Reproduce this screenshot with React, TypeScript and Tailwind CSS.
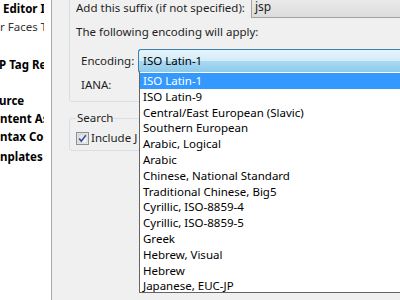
const encodings = [
  "ISO Latin-1",
  "ISO Latin-9",
  "Central/East European (Slavic)",
  "Southern European",
  "Arabic, Logical",
  "Arabic",
  "Chinese, National Standard",
  "Traditional Chinese, Big5",
  "Cyrillic, ISO-8859-4",
  "Cyrillic, ISO-8859-5",
  "Greek",
  "Hebrew, Visual",
  "Hebrew",
  "Japanese, EUC-JP",
];

const treeRows: { text: string; bold: boolean; x: number; y: number }[] = [
  { text: "Editor I", bold: true, x: 3, y: 9 },
  { text: "r Faces T", bold: false, x: 0, y: 27 },
  { text: "P Tag Re", bold: true, x: -1, y: 65 },
  { text: "urce", bold: true, x: -1, y: 101 },
  { text: "ntent As", bold: true, x: 0, y: 119 },
  { text: "ntax Col", bold: true, x: 0, y: 137 },
  { text: "nplates", bold: true, x: 0, y: 157 },
];

const CheckBox = () => (
  <svg width="13" height="13" viewBox="0 0 13 13" className="shrink-0">
    <defs>
      <linearGradient id="cb" x1="0" y1="0" x2="1" y2="1">
        <stop offset="0" stopColor="#dcdcdc" />
        <stop offset="1" stopColor="#ffffff" />
      </linearGradient>
    </defs>
    <rect x="0.5" y="0.5" width="12" height="12" fill="#f4f4f4" stroke="#8e8f8f" />
    <rect x="2" y="2" width="9" height="9" fill="url(#cb)" stroke="#b9b9b9" strokeWidth="0.6" />
    <path d="M3.2 6.4 L5.3 9.2 L9.8 3.2" fill="none" stroke="#2e4ea8" strokeWidth="1.6" />
  </svg>
);

export default function App() {
  return (
    <div
      className="relative flex w-[400px] h-[300px] overflow-hidden bg-[#f0f0f0] text-[11.5px] text-[#1e1e1e]"
      style={{ fontFamily: '"Noto Sans", "Liberation Sans", sans-serif' }}
    >
      {/* tree on the left */}
      <div className="w-[52px] shrink-0 bg-white border-r border-[#a9a9a9]">
        <div className="relative w-[44px] h-full overflow-hidden text-black">
          {treeRows.map((r) => (
            <div
              key={r.text}
              className={`absolute whitespace-nowrap leading-[16px] ${r.bold ? "font-bold" : "text-[#333]"}`}
              style={{ left: r.x, top: r.y - 8 }}
            >
              {r.text}
            </div>
          ))}
        </div>
      </div>

      {/* preferences page */}
      <div className="flex-1 min-w-0 pl-[17px]">
        <div className="-mt-[10px] -mr-[20px] border border-[#d5dfe5] rounded-[3px] pl-[6px] pt-[6px] pb-[7px]">
          <div className="flex items-center h-[21px]">
            <span className="w-[175px] shrink-0 whitespace-nowrap">Add this suffix (if not specified):</span>
            <div className="flex-1 h-[21px] flex items-center pl-[3px] border-l border-b border-[#a3a3a3] bg-gradient-to-b from-[#ececec] to-[#dcdcdc] text-[12px]">
              jsp
            </div>
          </div>
          <div className="flex items-center h-[18px] mt-[5px] whitespace-nowrap">The following encoding will apply:</div>
          <div className="flex items-center h-[24px] mt-[8px]">
            <span className="w-[62px] shrink-0 pl-[5px]">Encoding:</span>
            <div className="flex-1 h-[24px] flex items-center pl-[4px] rounded-l-[3px] border border-r-0 border-[#3c7fb1] bg-[linear-gradient(to_bottom,#e6f4fc_0%,#d3ecf9_48%,#a9d9f2_52%,#8ecaea_100%)] text-black">
              ISO Latin-1
            </div>
          </div>
          <div className="flex items-center h-[18px] mt-[3px] pl-[5px]">IANA:</div>
        </div>

        <div className="relative mt-[16px] -mr-[20px] border border-[#d5dfe5] rounded-[3px] pl-[6px] pt-[10px] pb-[3px]">
          <span className="absolute left-[6px] -top-[9px] px-[1px] bg-[#f0f0f0] leading-[16px]">Search</span>
          <div className="flex items-center h-[18px] gap-[2px]">
            <CheckBox />
            <span className="whitespace-nowrap">Include J</span>
          </div>
        </div>
      </div>

      {/* open encoding drop-down */}
      <div className="absolute left-[139px] top-[72px] w-[280px] h-[221px] bg-white border border-t-0 border-[#646464] overflow-hidden text-black">
        <div className="h-px" />
        {encodings.map((e, i) => (
          <div
            key={e}
            className={`h-[15.8px] leading-[15.8px] pl-[3px] whitespace-nowrap ${i === 0 ? "bg-[#3399ff] text-white" : ""}`}
          >
            {e}
          </div>
        ))}
      </div>
    </div>
  );
}
